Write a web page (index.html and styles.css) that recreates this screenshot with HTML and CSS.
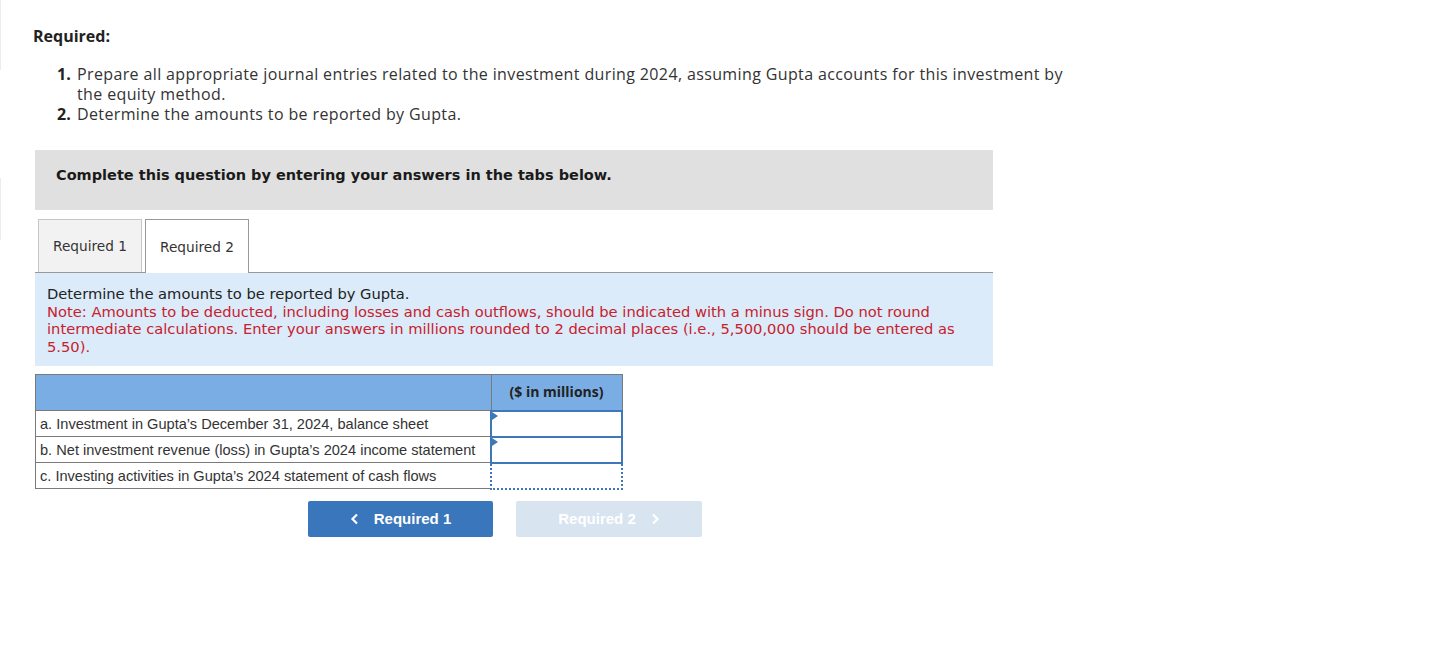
FILE: index.html
```html
<!DOCTYPE html>
<html lang="en">
<head>
  <meta charset="UTF-8" />
  <title>Required</title>
  <link rel="stylesheet" href="styles.css">
</head>
<body>
  <div class="edge edge-top"></div>
  <div class="edge edge-mid"></div>

  <div id="question">
    <h4 class="req-title">Required:</h4>
    <ol class="req-list">
      <li><b>1.</b><span>Prepare all appropriate journal entries related to the investment during 2024, assuming Gupta accounts for this investment by the equity method.</span></li>
      <li><b>2.</b><span>Determine the amounts to be reported by Gupta.</span></li>
    </ol>

    <div class="tabs-wrap">
      <div class="banner">Complete this question by entering your answers in the tabs below.</div>

      <div class="tabs">
        <div class="tab">Required 1</div>
        <div class="tab active">Required 2</div>
      </div>

      <div class="info">
        <div>Determine the amounts to be reported by Gupta.</div>
        <div class="note">Note: Amounts to be deducted, including losses and cash outflows, should be indicated with a minus sign. Do not round intermediate calculations. Enter your answers in millions rounded to 2 decimal places (i.e., 5,500,000 should be entered as 5.50).</div>
      </div>

      <table class="answers">
        <tr class="head">
          <th></th>
          <th class="col-val">($ in millions)</th>
        </tr>
        <tr>
          <td>a. Investment in Gupta’s December 31, 2024, balance sheet</td>
          <td class="cell-input"><span class="flag"></span></td>
        </tr>
        <tr>
          <td>b. Net investment revenue (loss) in Gupta’s 2024 income statement</td>
          <td class="cell-input"><span class="flag"></span></td>
        </tr>
        <tr>
          <td>c. Investing activities in Gupta’s 2024 statement of cash flows</td>
          <td class="cell-dotted"></td>
        </tr>
      </table>

      <div class="nav">
        <button class="nav-btn prev">
          <svg width="10" height="12" viewBox="0 0 10 12"><path d="M7 1.5 L2.5 6 L7 10.5" fill="none" stroke="#fff" stroke-width="2.2"/></svg>
          Required 1
        </button>
        <button class="nav-btn next">
          Required 2
          <svg width="10" height="12" viewBox="0 0 10 12"><path d="M3 1.5 L7.5 6 L3 10.5" fill="none" stroke="#fff" stroke-width="2.2"/></svg>
        </button>
      </div>
    </div>
  </div>
</body>
</html>
```

FILE: styles.css
```css
html, body {
  margin: 0;
  padding: 0;
  background: #fff;
}

body {
  font-family: "Open Sans", "Liberation Sans", sans-serif;
  color: #333;
}

.edge {
  position: absolute;
  left: 0;
  width: 1px;
  background: #ececec;
}

.edge-top { top: 0; height: 70px; }
.edge-mid { top: 178px; height: 62px; }

#question {
  padding: 26px 0 0 33px;
}

.req-title {
  margin: 0;
  font-size: 16px;
  font-weight: 700;
  line-height: 20px;
  color: #222;
}

.req-list {
  list-style: none;
  margin: 18px 0 0;
  padding: 0 0 0 24px;
  width: 1020px;
  font-size: 16px;
  letter-spacing: 0.37px;
  line-height: 20px;
  color: #333;
}

.req-list li {
  display: flex;
}

.req-list li b {
  width: 20px;
  flex: none;
  text-align: left;
  letter-spacing: 0;
  color: #222;
}

.tabs-wrap {
  margin: 26px 0 0 2px;
  width: 958px;
}

.banner {
  background: #e0e0e0;
  height: 60px;
  box-sizing: border-box;
  padding: 17px 21px 0;
  font-family: "DejaVu Sans", Verdana, sans-serif;
  font-weight: 700;
  font-size: 14.5px;
  color: #1a1a1a;
}

.tabs {
  display: flex;
  gap: 3px;
  margin-top: 9px;
  padding-left: 3px;
  border-bottom: 1px solid #999;
}

.tab {
  height: 53px;
  box-sizing: border-box;
  padding: 0 14px;
  display: flex;
  align-items: center;
  background: #f2f2f2;
  border: 1px solid #c6c6c6;
  border-bottom: none;
  font-family: "DejaVu Sans", Verdana, sans-serif;
  font-size: 13.7px;
  color: #333;
  margin-bottom: -1px;
}

.tab.active {
  background: #fff;
  border-color: #999;
  height: 54px;
  position: relative;
}

.info {
  background: #dbebf9;
  padding: 12px 12px 10px;
  font-family: "DejaVu Sans", Verdana, sans-serif;
  font-size: 14.7px;
  line-height: 17.7px;
  color: #222;
}

.note {
  color: #c8202c;
}

.answers {
  margin-top: 8px;
  border-collapse: collapse;
  font-family: "Liberation Sans", Arial, sans-serif;
  font-size: 14.6px;
  line-height: 16px;
  color: #333;
}

.answers .head th {
  background: #7aade3;
  height: 35px;
  border: 1px solid #7a7a7a;
  padding: 0;
}

.answers .col-val {
  width: 130px;
  font-family: "Open Sans", "Liberation Sans", sans-serif;
  font-weight: 700;
  font-size: 14px;
  color: #222;
}

.answers td {
  height: 24px;
  border: 1px solid #7a7a7a;
  padding: 0 4px;
  white-space: nowrap;
}

.answers td:first-child {
  width: 446px;
}

.answers .cell-input {
  position: relative;
  border: 2px solid #3e78b8;
  padding: 0;
  background: #fff;
}

.answers .cell-dotted {
  border: 2px dotted #3e78b8;
}

.flag {
  position: absolute;
  top: 0;
  left: 0;
  width: 0;
  height: 0;
  border-top: 4px solid transparent;
  border-bottom: 4px solid transparent;
  border-left: 6px solid #3e78b8;
}

.nav {
  display: flex;
  gap: 23px;
  margin: 11px 0 0 273px;
}

.nav-btn {
  width: 185px;
  height: 36px;
  border: none;
  border-radius: 2px;
  display: flex;
  align-items: center;
  justify-content: center;
  gap: 14px;
  font-family: "Liberation Sans", Arial, sans-serif;
  font-weight: 700;
  font-size: 15px;
  color: #fff;
}

.nav-btn.prev {
  background: #3a76bb;
}

.nav-btn.next {
  width: 186px;
  background: #d9e4f1;
}
```
